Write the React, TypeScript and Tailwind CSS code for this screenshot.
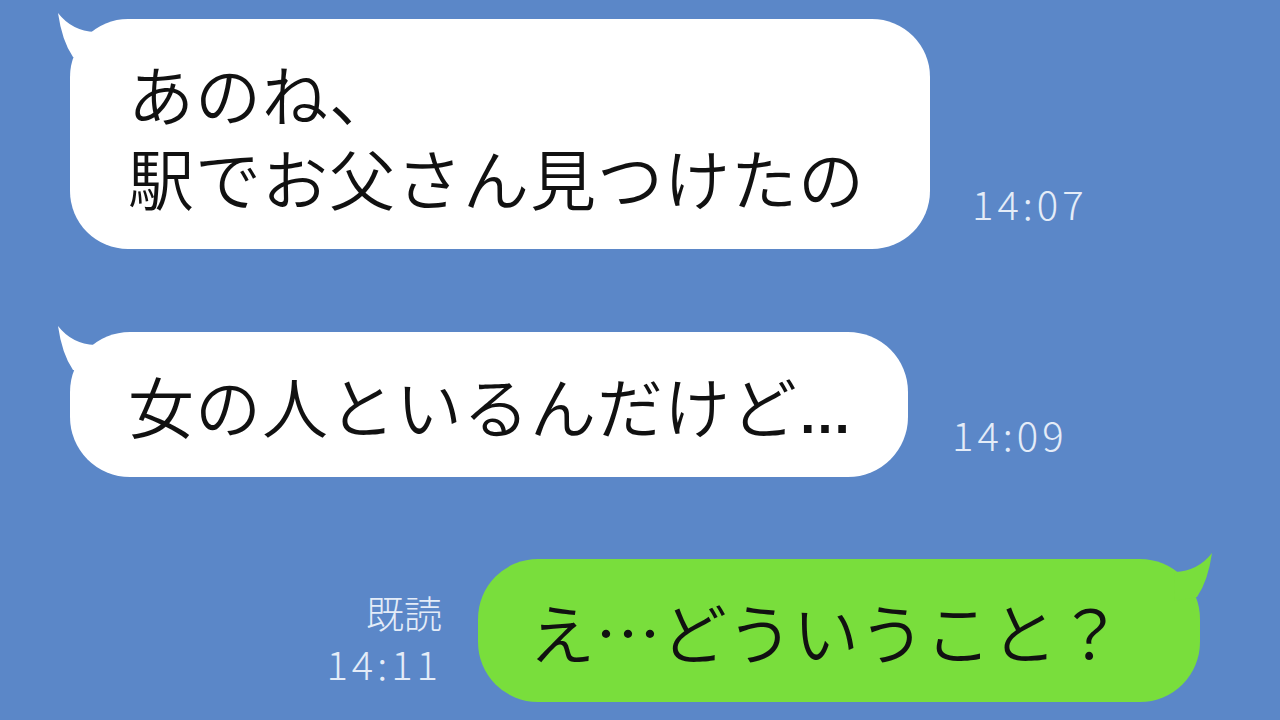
// LINE style chat screenshot

type TailProps = { fill: string; right?: boolean };

function Tail({ fill, right }: TailProps) {
  return (
    <svg
      width={50}
      height={60}
      viewBox="0 0 50 60"
      className={
        right
          ? "absolute -right-[14px] -top-[8px] -scale-x-100"
          : "absolute -left-[14px] -top-[8px]"
      }
    >
      <path d="M2 2 Q6 30 17 46 L40 50 L39 21 Q16 20 2 2 Z" fill={fill} />
    </svg>
  );
}

function Time({ children }: { children: string }) {
  return (
    <span className="text-[40px] leading-none tracking-[4px] font-light text-[#e4ecf8]">
      {children}
    </span>
  );
}

export default function App() {
  return (
    <div className="w-[1280px] h-[720px] overflow-hidden bg-[#5b87c8] font-['Noto_Sans_CJK_JP',sans-serif] font-[350] pt-[19px] pl-[70px] pr-[80px] flex flex-col">
      {/* first message */}
      <div className="flex items-end gap-[42px]">
        <div className="relative w-[860px] bg-white rounded-[58px] pl-[58px] py-[31px] text-[66px] leading-[84px] tracking-[1px] text-[#111]">
          <Tail fill="#ffffff" />
          <p className="relative">あのね、</p>
          <p className="relative">駅でお父さん見つけたの</p>
        </div>
        <div className="pb-[24px]">
          <Time>14:07</Time>
        </div>
      </div>

      {/* second message */}
      <div className="flex items-end gap-[44px] mt-[83px]">
        <div className="relative w-[838px] bg-white rounded-[60px] pl-[58px] py-[30px] text-[66px] leading-[85px] tracking-[1px] text-[#111]">
          <Tail fill="#ffffff" />
          <p className="relative h-[85px]">
            女の人といるんだけど
            <span className="font-['Liberation_Sans',sans-serif] font-bold text-[54px] leading-none tracking-[-2px]">…</span>
          </p>
        </div>
        <div className="pb-[21px]">
          <Time>14:09</Time>
        </div>
      </div>

      {/* my reply */}
      <div className="flex items-end justify-end gap-[36px] mt-[82px]">
        <div className="flex flex-col items-end gap-[12px] pb-[19px] text-[#e4ecf8]">
          <span className="text-[38px] leading-none font-light">既読</span>
          <Time>14:11</Time>
        </div>
        <div className="relative w-[722px] bg-[#79de3c] rounded-[60px] pl-[51px] py-[29px] text-[66px] leading-[85px] text-[#111]">
          <Tail fill="#79de3c" right />
          <p className="relative">え…どういうこと？</p>
        </div>
      </div>
    </div>
  );
}
